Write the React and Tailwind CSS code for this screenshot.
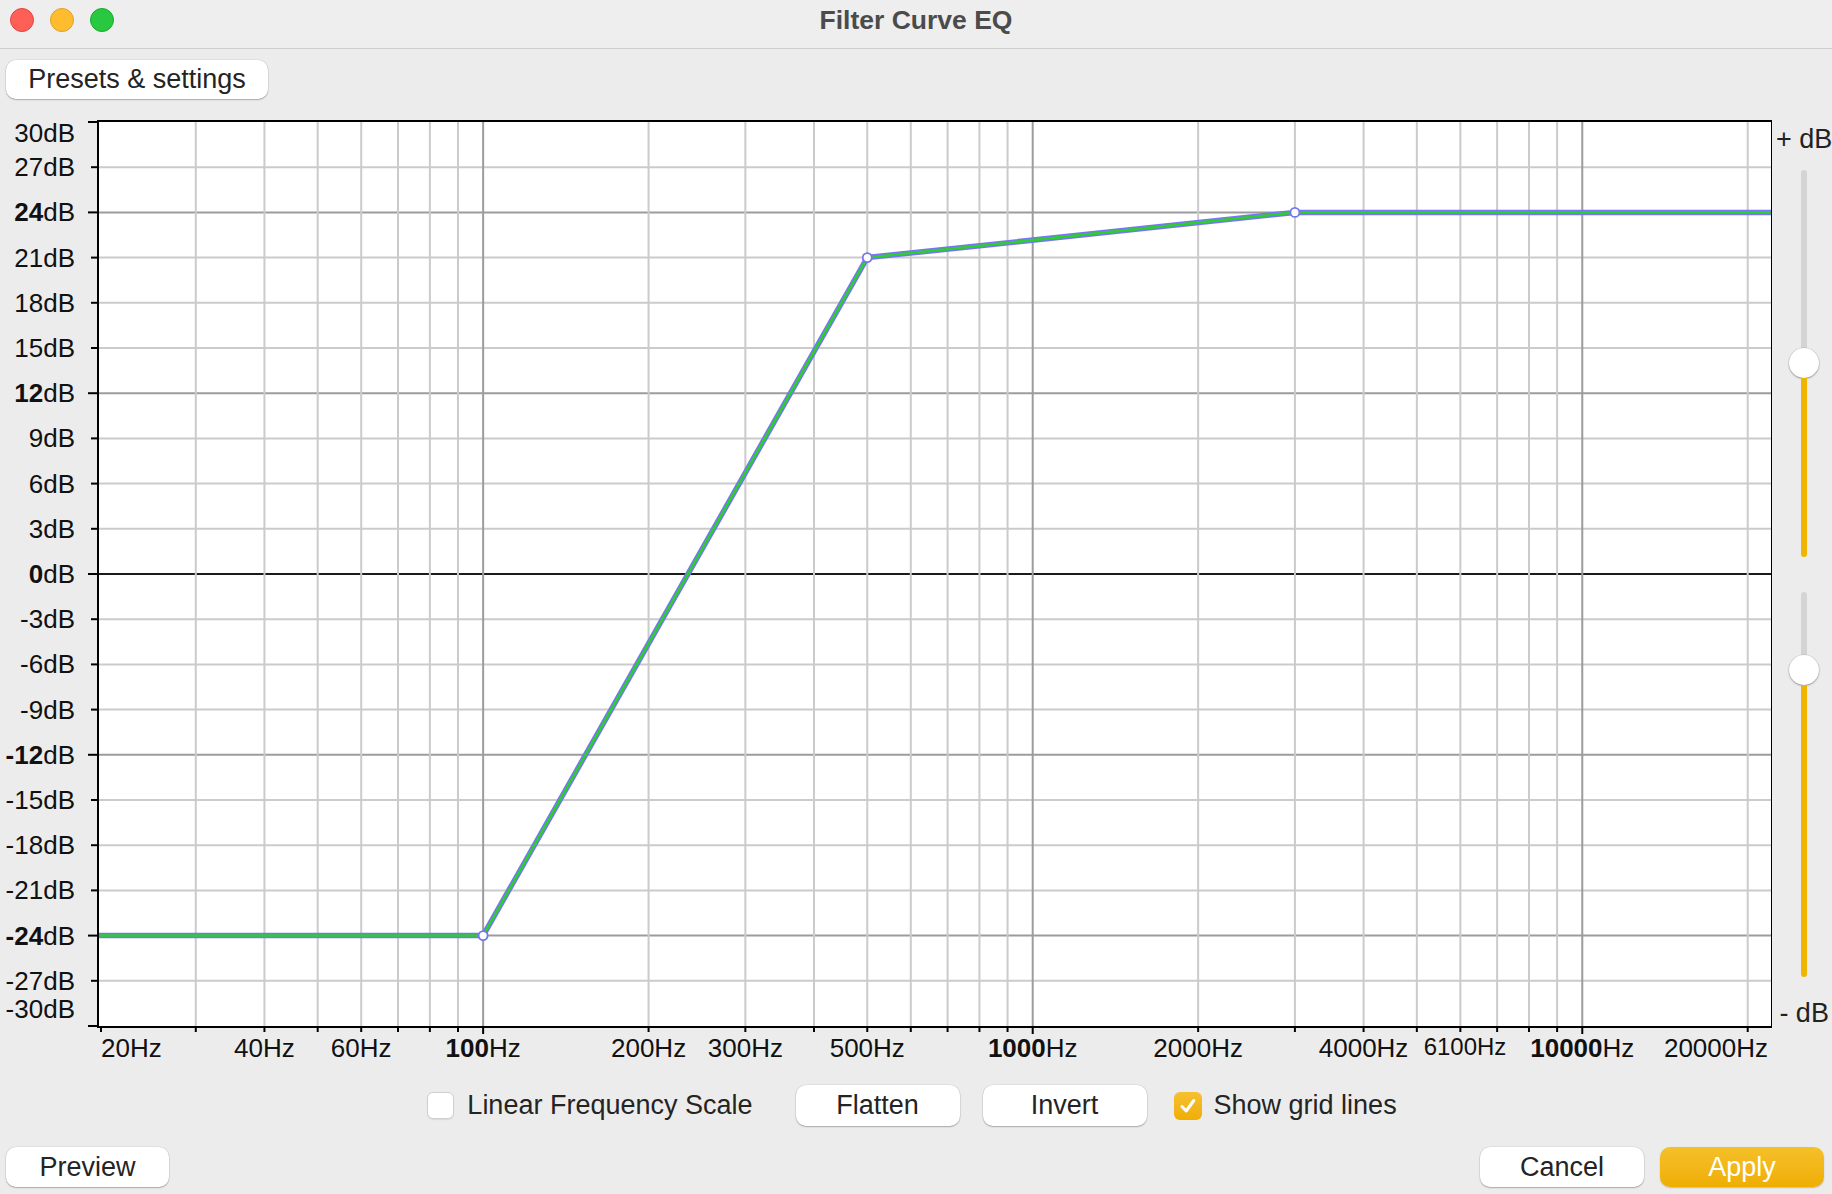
import React from 'react';

const X0 = 99;
const X1 = 1771;
const Y0 = 122;
const Y1 = 1026;

const fx = (f) => X0 + (Math.log10(f / 20) / Math.log10(22050 / 20)) * (X1 - X0);
const fy = (db) => 574 - (db * (Y1 - Y0)) / 60;

const FREQS = [
  20, 30, 40, 50, 60, 70, 80, 90, 100, 200, 300, 400, 500, 600, 700, 800, 900,
  1000, 2000, 3000, 4000, 5000, 6000, 7000, 8000, 9000, 10000, 20000,
];
const MAJOR_F = [100, 1000, 10000];

const DBS = [];
for (let d = 30; d >= -30; d -= 3) DBS.push(d);
const MAJOR_DB = [30, 24, 12, 0, -12, -24, -30];
const BOLD_DB = [24, 12, 0, -12, -24];

const X_LABELS = [
  { f: 20, x: 101, anchor: 'start', bold: '', rest: '20Hz' },
  { f: 40, bold: '', rest: '40Hz' },
  { f: 60, bold: '', rest: '60Hz' },
  { f: 100, bold: '100', rest: 'Hz' },
  { f: 200, bold: '', rest: '200Hz' },
  { f: 300, bold: '', rest: '300Hz' },
  { f: 500, bold: '', rest: '500Hz' },
  { f: 1000, bold: '1000', rest: 'Hz' },
  { f: 2000, bold: '', rest: '2000Hz' },
  { f: 4000, bold: '', rest: '4000Hz' },
  { f: 6100, x: 1465, bold: '', rest: '6100Hz', small: true },
  { f: 10000, bold: '10000', rest: 'Hz' },
  { f: 20000, x: 1768, anchor: 'end', bold: '', rest: '20000Hz' },
];

const FONT = '"Liberation Sans", Arial, sans-serif';

function Chart() {
  const pts = [
    [X0, fy(-24)],
    [fx(100), fy(-24)],
    [fx(500), fy(21)],
    [fx(3000), fy(24)],
    [X1, fy(24)],
  ];
  const toStr = (a) => a.map((p) => p.join(',')).join(' ');

  return (
    <svg width="1772" height="970" viewBox="0 100 1772 970" className="block shrink-0">
      <rect x={X0} y={Y0} width={X1 - X0} height={Y1 - Y0} fill="#ffffff" />

      {/* horizontal grid */}
      {DBS.filter((d) => d !== 30 && d !== -30).map((d) => (
        <line
          key={'h' + d}
          x1={X0}
          x2={X1}
          y1={fy(d)}
          y2={fy(d)}
          stroke={d === 0 ? '#1a1a1a' : MAJOR_DB.includes(d) ? '#9c9c9c' : '#cbcbcb'}
          strokeWidth="2"
        />
      ))}

      {/* vertical grid */}
      {FREQS.filter((f) => f !== 20).map((f) => (
        <line
          key={'v' + f}
          x1={fx(f)}
          x2={fx(f)}
          y1={Y0}
          y2={Y1}
          stroke={MAJOR_F.includes(f) ? '#9c9c9c' : '#cbcbcb'}
          strokeWidth="2"
        />
      ))}

      {/* frame */}
      <rect x={X0 - 1} y={Y0 - 1} width={X1 - X0 + 2} height={Y1 - Y0 + 2} fill="none" stroke="#000" strokeWidth="2" />

      {/* left ticks */}
      {DBS.map((d) => (
        <line
          key={'t' + d}
          x1={MAJOR_DB.includes(d) ? 88 : 91}
          x2={97}
          y1={fy(d)}
          y2={fy(d)}
          stroke="#000"
          strokeWidth="2"
        />
      ))}

      {/* bottom ticks */}
      {FREQS.map((f) => (
        <line
          key={'b' + f}
          x1={f === 20 ? X0 + 2 : fx(f)}
          x2={f === 20 ? X0 + 2 : fx(f)}
          y1={Y1}
          y2={Y1 + (MAJOR_F.includes(f) ? 8 : 6)}
          stroke="#000"
          strokeWidth="2"
        />
      ))}

      {/* y labels */}
      {DBS.map((d) => {
        const y = d === 30 ? 133 : d === -30 ? 1009 : fy(d);
        const bold = BOLD_DB.includes(d);
        return (
          <text
            key={'l' + d}
            x={75}
            y={y}
            textAnchor="end"
            dominantBaseline="central"
            fontFamily={FONT}
            fontSize="26"
            fill="#111"
          >
            {bold ? <tspan fontWeight="700">{d}</tspan> : d}
            dB
          </text>
        );
      })}

      {/* x labels */}
      {X_LABELS.map((l) => (
        <text
          key={'x' + l.f}
          x={l.x ?? fx(l.f)}
          y={l.small ? 1046 : 1048}
          textAnchor={l.anchor ?? 'middle'}
          dominantBaseline="central"
          fontFamily={FONT}
          fontSize={l.small ? 24 : 26}
          fill="#111"
        >
          {l.bold && <tspan fontWeight="700">{l.bold}</tspan>}
          {l.rest}
        </text>
      ))}

      {/* curve: blue handles line with the green response on top */}
      <polyline points={toStr(pts)} fill="none" stroke="#7676f2" strokeWidth="5.5" strokeLinejoin="round" />
      <polyline points={toStr(pts)} fill="none" stroke="#2bd02b" strokeWidth="2.5" strokeLinejoin="round" />
      {pts.slice(1, 4).map((p, i) => (
        <circle key={i} cx={p[0]} cy={p[1]} r="4.5" fill="#ffffff" stroke="#7676f2" strokeWidth="1.8" />
      ))}
    </svg>
  );
}

function Slider({ gray, yellow }) {
  return (
    <div className="flex flex-col items-center">
      <div className="w-[6px] rounded-t-full bg-[#d4d4d4]" style={{ height: gray }} />
      <div className="w-[30px] h-[30px] rounded-full bg-white shadow-[0_1px_2px_rgba(0,0,0,0.3),0_0_0_0.5px_rgba(0,0,0,0.12)]" />
      <div className="w-[6px] rounded-b-full bg-[#f1b400]" style={{ height: yellow }} />
    </div>
  );
}

function Btn({ children, className = '' }) {
  return (
    <button
      className={`bg-white rounded-[10px] text-[27px] leading-none text-[#242424] flex items-center justify-center shadow-[0_1px_1.5px_rgba(0,0,0,0.25),0_0_0_0.5px_rgba(0,0,0,0.1)] ${className}`}
    >
      {children}
    </button>
  );
}

export default function App() {
  return (
    <div
      className="w-[1832px] h-[1194px] bg-[#ececec] flex flex-col overflow-hidden"
      style={{ fontFamily: FONT }}
    >
      {/* title bar */}
      <div className="h-[49px] shrink-0 bg-[#eeeeee] border-b border-[#cfcfcf] grid grid-cols-[1fr_auto_1fr] items-start">
        <div className="flex items-center gap-[16px] pl-[10px] pt-[8px]">
          <span className="w-[24px] h-[24px] rounded-full bg-[#fe5f57] border border-[#e0443e]" />
          <span className="w-[24px] h-[24px] rounded-full bg-[#febc2e] border border-[#dea123]" />
          <span className="w-[24px] h-[24px] rounded-full bg-[#28c840] border border-[#1aab29]" />
        </div>
        <div className="pt-[7px] text-[26.5px] font-bold text-[#4b4b4b] leading-[26px]">Filter Curve EQ</div>
        <div />
      </div>

      {/* presets */}
      <div className="pl-[6px] pt-[11px]">
        <Btn className="w-[262px] h-[39px]">Presets &amp; settings</Btn>
      </div>

      {/* chart row */}
      <div className="flex mt-[1px]">
        <Chart />
        <div className="flex-1 flex flex-col items-center pl-[4px]">
          <div className="mt-[24px] h-[30px] text-[27px] leading-[30px] text-[#222] whitespace-nowrap">+ dB</div>
          <div className="mt-[16px]">
            <Slider gray={178} yellow={179} />
          </div>
          <div className="mt-[35px]">
            <Slider gray={63} yellow={292} />
          </div>
          <div className="mt-[21px] h-[30px] text-[27px] leading-[30px] text-[#222] whitespace-nowrap">- dB</div>
        </div>
      </div>

      {/* options row */}
      <div className="mt-[15px] flex items-center justify-center pr-[8px]">
        <span className="w-[27px] h-[27px] rounded-[6px] bg-white border border-[#cfcfcf] shadow-[0_1px_1px_rgba(0,0,0,0.08)]" />
        <span className="ml-[13px] text-[27px] leading-none text-[#242424]">Linear Frequency Scale</span>
        <Btn className="ml-[43px] w-[164px] h-[41px]">Flatten</Btn>
        <Btn className="ml-[23px] w-[164px] h-[41px]">Invert</Btn>
        <span className="ml-[27px] w-[28px] h-[28px] rounded-[6px] bg-gradient-to-b from-[#f6c02e] to-[#efae00] flex items-center justify-center">
          <svg width="20" height="20" viewBox="0 0 20 20">
            <path d="M4 10.5 L8.2 15 L15.8 4.5" fill="none" stroke="#ffffff" strokeWidth="3" strokeLinecap="round" strokeLinejoin="round" />
          </svg>
        </span>
        <span className="ml-[12px] text-[27px] leading-none text-[#242424]">Show grid lines</span>
      </div>

      {/* bottom row */}
      <div className="mt-[21px] flex items-center px-[6px] pr-[8px]">
        <Btn className="w-[163px] h-[40px]">Preview</Btn>
        <div className="flex-1" />
        <Btn className="w-[164px] h-[40px]">Cancel</Btn>
        <button className="ml-[16px] w-[164px] h-[40px] rounded-[10px] bg-gradient-to-b from-[#f5c028] to-[#efae00] text-white text-[27px] leading-none flex items-center justify-center shadow-[0_1px_1.5px_rgba(0,0,0,0.2)]">
          Apply
        </button>
      </div>
    </div>
  );
}
